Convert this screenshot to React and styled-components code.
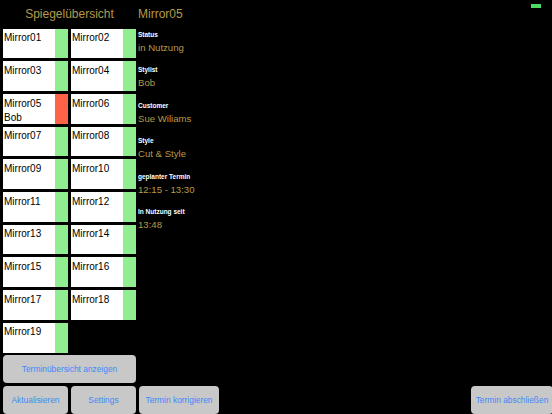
import React from 'react';
import styled, { createGlobalStyle } from 'styled-components';

const GlobalStyle = createGlobalStyle`
  html, body {
    margin: 0;
    padding: 0;
    background: #000;
  }
  body {
    font-family: "Liberation Sans", Arial, sans-serif;
  }
`;

const gold = '#b59a4a';

const Page = styled.div`
  position: relative;
  width: 552px;
  height: 414px;
  background: #000;
  overflow: hidden;
  display: flex;
  flex-direction: column;
`;

const Header = styled.div`
  height: 29px;
  display: flex;
  align-items: center;
  color: ${gold};
  font-size: 12px;
`;

const HeaderLeft = styled.div`
  width: 133px;
  margin-left: 3px;
  text-align: center;
`;

const HeaderRight = styled.div`
  margin-left: 2px;
`;

const Body = styled.div`
  display: flex;
`;

const MirrorGrid = styled.div`
  margin-left: 3px;
  width: 133px;
  display: grid;
  grid-template-columns: 65px 65px;
  grid-auto-rows: 29.7px;
  gap: 3px;
`;

const Cell = styled.div`
  display: flex;
  background: #fff;
`;

const CellText = styled.div`
  flex: 1;
  padding: 2.5px 0 0 1px;
  font-size: 10px;
  line-height: 14.5px;
  color: #000;
`;

const StatusStrip = styled.div`
  width: 13px;
  background: ${(p) => (p.$busy ? '#ff6347' : '#90ee90')};
`;

const Details = styled.div`
  margin-left: 2px;
  display: flex;
  flex-direction: column;
`;

const Field = styled.div`
  height: 35.5px;
`;

const Label = styled.div`
  height: 11px;
  line-height: 11px;
  font-size: 6.5px;
  font-weight: bold;
  color: #fff;
`;

const Value = styled.div`
  margin-top: 1px;
  height: 14px;
  line-height: 14px;
  font-size: 9.6px;
  color: ${gold};
`;

const ActionRow = styled.div`
  margin-top: 2.5px;
  padding-left: 3px;
  display: flex;
`;

const BottomBar = styled.div`
  margin-top: 3.5px;
  padding-left: 3px;
  display: flex;
  gap: 3px;
`;

const Button = styled.button`
  width: ${(p) => p.$w}px;
  height: ${(p) => p.$h || 28}px;
  margin-left: ${(p) => (p.$push ? 'auto' : '0')};
  margin-right: ${(p) => (p.$push ? '-1px' : '0')};
  border: none;
  border-radius: 4px;
  background: #c8c8c8;
  color: #3d8af7;
  font-family: "Liberation Sans", Arial, sans-serif;
  font-size: 8.4px;
  padding: 0;
  text-align: center;
`;

const Indicator = styled.div`
  position: absolute;
  top: 4px;
  left: 531px;
  width: 10px;
  height: 4px;
  background: #4cd964;
`;

const mirrors = Array.from({ length: 19 }, (_, i) => ({
  name: `Mirror${String(i + 1).padStart(2, '0')}`,
  stylist: i === 4 ? 'Bob' : null,
}));

const fields = [
  ['Status', 'in Nutzung'],
  ['Stylist', 'Bob'],
  ['Customer', 'Sue Wiliams'],
  ['Style', 'Cut & Style'],
  ['geplanter Termin', '12:15 - 13:30'],
  ['In Nutzung seit', '13:48'],
];

export default function App() {
  return (
    <>
      <GlobalStyle />
      <Page>
        <Indicator />
        <Header>
          <HeaderLeft>Spiegelübersicht</HeaderLeft>
          <HeaderRight>Mirror05</HeaderRight>
        </Header>
        <Body>
          <MirrorGrid>
            {mirrors.map((m) => (
              <Cell key={m.name}>
                <CellText>
                  {m.name}
                  {m.stylist && <br />}
                  {m.stylist}
                </CellText>
                <StatusStrip $busy={!!m.stylist} />
              </Cell>
            ))}
          </MirrorGrid>
          <Details>
            {fields.map(([label, value]) => (
              <Field key={label}>
                <Label>{label}</Label>
                <Value>{value}</Value>
              </Field>
            ))}
          </Details>
        </Body>
        <ActionRow>
          <Button $w={133} $h={27.5}>Terminübersicht anzeigen</Button>
        </ActionRow>
        <BottomBar>
          <Button $w={65}>Aktualisieren</Button>
          <Button $w={65}>Settings</Button>
          <Button $w={80}>Termin korrigieren</Button>
          <Button $w={82} $push>Termin abschließen</Button>
        </BottomBar>
      </Page>
    </>
  );
}
